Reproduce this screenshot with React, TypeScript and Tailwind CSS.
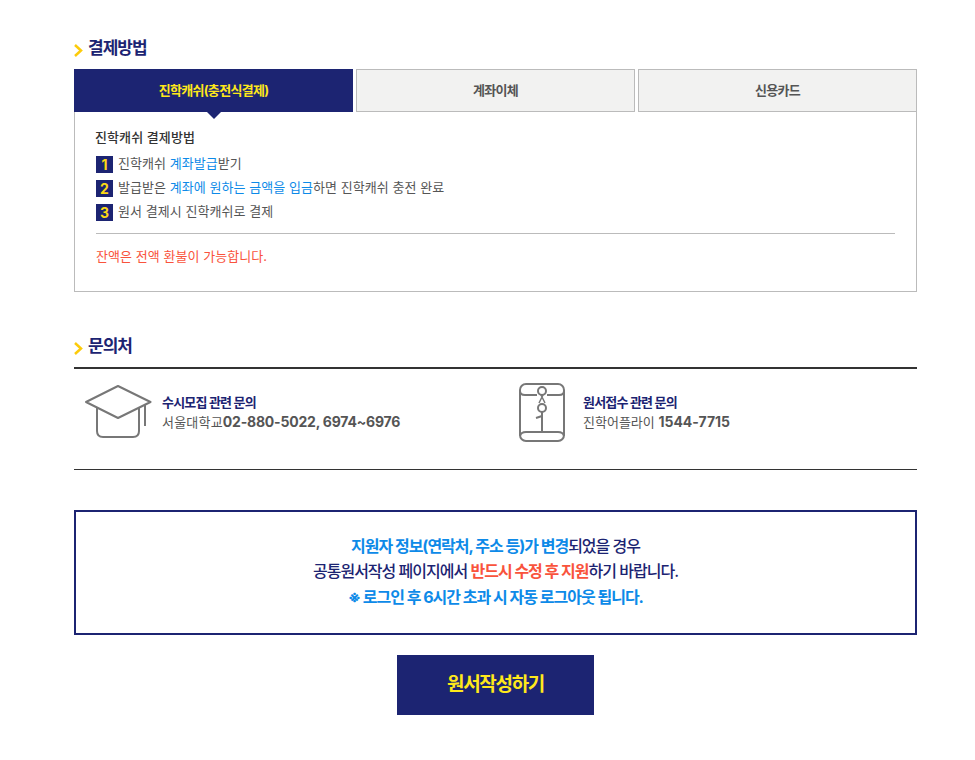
const fontStack = { fontFamily: 'Inter, "Noto Sans CJK KR", sans-serif' };

const Chevron = () => (
    <svg width="9" height="13" viewBox="0 0 9 13" className="mt-[5px] shrink-0">
        <path d="M1 1l6 5.500-6 5.500" fill="none" stroke="#fccb0a" strokeWidth="2.500" />
    </svg>
);

const SectionTitle = ({ title }: { title: string }) => (
    <div className="flex items-center gap-[5px] h-[24px]">
        <Chevron />
        <h3 className="text-[17px] font-bold tracking-[-1px] text-[#1c2472] leading-[24px]">{title}</h3>
    </div>
);

const CapIcon = () => (
    <svg width="68" height="54" viewBox="0 0 68 54" className="shrink-0" fill="none" stroke="#777" strokeWidth="2">
        <path d="M33 1L65.500 17L33 33L1 17Z" strokeLinejoin="round" />
        <path d="M12 23V46Q12 52 18 52H48Q54 52 54 46V23" />
        <path d="M60 20V41" />
    </svg>
);

const EnvelopeIcon = () => (
    <svg width="46" height="59" viewBox="0 0 46 59" className="shrink-0" fill="none" stroke="#777" strokeWidth="2">
        <rect x="1" y="1" width="44" height="57" rx="6" />
        <path d="M1 8Q1 12 6 12H18M28 12H40Q45 12 45 8" />
        <path d="M1 53Q2 49 7 49H39Q44 49 45 53" />
        <circle cx="23" cy="8" r="4" />
        <circle cx="23" cy="25" r="4" />
        <path d="M22 12L26 20M24 12L20 20" strokeWidth="1.500" />
        <path d="M23 29V49M17 35L23 33" />
    </svg>
);

const steps = [
    <>진학캐쉬 <span className="text-[#0d8ae8]">계좌발급</span>받기</>,
    <>발급받은 <span className="text-[#0d8ae8]">계좌에 원하는 금액을 입금</span>하면 진학캐쉬 충전 완료</>,
    <>원서 결제시 진학캐쉬로 결제</>,
];

const App = () => {
    return (
        <div className="w-[975px] h-[760px] bg-white overflow-hidden pt-[36px] pl-[74px]" style={fontStack}>
            <div className="w-[843px]">
                <SectionTitle title="결제방법" />

                <div className="flex gap-[3px] mt-[9px] h-[43px]">
                    <div className="relative w-[279px] flex items-center justify-center bg-[#1c2472] text-[13px] font-bold tracking-[-0.7px] text-[#ffe81a]">
                        진학캐쉬(충전식결제)
                        <span className="absolute left-1/2 top-full -translate-x-1/2 z-10 w-0 h-0 border-x-[7px] border-x-transparent border-t-[7px] border-t-[#1c2472]"></span>
                    </div>
                    <div className="w-[279px] flex items-center justify-center border border-[#bbb] bg-[#f2f2f1] text-[13px] font-bold tracking-[-0.7px] text-[#555]">계좌이체</div>
                    <div className="w-[279px] flex items-center justify-center border border-[#bbb] bg-[#f2f2f1] text-[13px] font-bold tracking-[-0.7px] text-[#555]">신용카드</div>
                </div>

                <div className="border border-[#bbb] border-t-0 h-[180px] pt-[15px] px-[20px]">
                    <p className="text-[13px] font-medium tracking-[0.1px] text-[#333] leading-[20px]">진학캐쉬 결제방법</p>
                    <ul className="mt-[5px]">
                        {steps.map((step, i) => (
                            <li key={i} className="flex items-center h-[24px] text-[13px] tracking-[0.05px] text-[#555]">
                                <span className="flex items-center justify-center ml-[1px] mr-[5px] w-[17px] h-[17px] bg-[#1c2472] text-[14px] font-bold text-[#fcd814]">{i + 1}</span>
                                <span>{step}</span>
                            </li>
                        ))}
                    </ul>
                    <div className="mt-[9px] mx-[1px] border-t border-[#bbb]"></div>
                    <p className="mt-[12px] ml-[1px] text-[13px] tracking-[0.05px] text-[#f9533c] leading-[20px]">잔액은 전액 환불이 가능합니다.</p>
                </div>

                <div className="mt-[42px]">
                    <SectionTitle title="문의처" />
                </div>
                <div className="mt-[9px] border-t-2 border-[#333] border-b-[1px] border-b-[#333] h-[103px] flex">
                    <div className="w-[421px] flex items-start pl-[11px] pt-[16px] gap-[9px]">
                        <CapIcon />
                        <div className="pt-[7px]">
                            <p className="text-[13px] font-bold tracking-[-0.8px] text-[#1c2472] leading-[20px]">수시모집 관련 문의</p>
                            <p className="text-[13px] tracking-[0.2px] text-[#555] leading-[20px]">서울대학교<b className="text-[14px] tracking-[-0.2px] font-bold">02-880-5022, 6974~6976</b></p>
                        </div>
                    </div>
                    <div className="flex items-start pl-[24px] pt-[14px] gap-[18px]">
                        <EnvelopeIcon />
                        <div className="pt-[9px]">
                            <p className="text-[13px] font-bold tracking-[-0.8px] text-[#1c2472] leading-[20px]">원서접수 관련 문의</p>
                            <p className="text-[13px] text-[#555] leading-[20px]">진학어플라이 <b className="text-[14px] font-bold">1544-7715</b></p>
                        </div>
                    </div>
                </div>

                <div className="mt-[40px] h-[125px] pb-[1px] border-2 border-[#1c2472] flex flex-col items-center justify-center text-[16px] font-medium tracking-[-1px] leading-[25.500px] text-[#1c2472]">
                    <p><span className="font-bold text-[#0d8ae8]">지원자 정보(연락처, 주소 등)가 변경</span>되었을 경우</p>
                    <p>공통원서작성 페이지에서 <span className="font-bold text-[#f9533c]">반드시 수정 후 지원</span>하기 바랍니다.</p>
                    <p className="font-bold text-[#0d8ae8]">※ 로그인 후 6시간 초과 시 자동 로그아웃 됩니다.</p>
                </div>

                <div className="flex justify-center mt-[20px]">
                    <button className="w-[197px] h-[60px] bg-[#1c2472] text-[19px] font-bold tracking-[-1.3px] text-[#ffe81a]">원서작성하기</button>
                </div>
            </div>
        </div>
    );
};

export default App;
